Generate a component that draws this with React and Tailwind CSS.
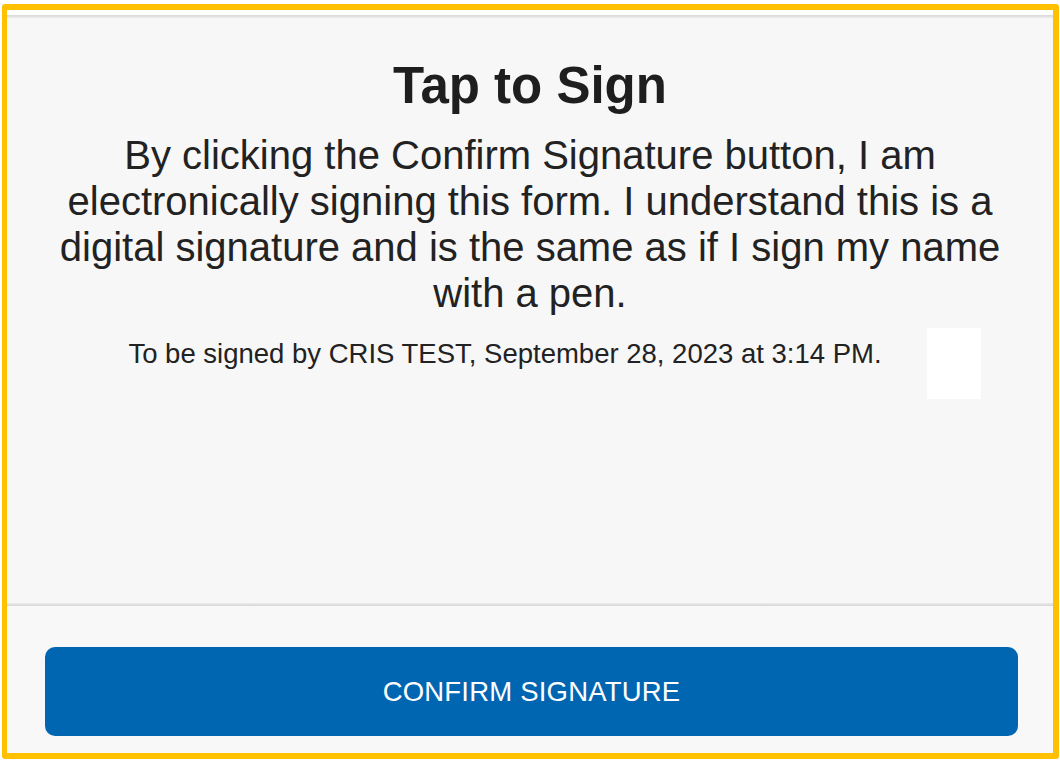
import React from 'react';

function App() {
  return (
    <div className="w-[1060px] h-[760px] bg-white pt-[4px] pl-[2px] pr-[1px] pb-[1px] font-['Liberation_Sans',Arial,sans-serif]">
      <div className="h-full flex flex-col border-[6px] border-l-[5px] border-[#ffc000] rounded-[3px] bg-white">
        <div className="h-[5px] bg-white" />
        <div className="h-[3px] bg-gradient-to-b from-[#d9d9d9] to-[#ebebeb]" />

        {/* Signing panel */}
        <div className="flex-1 bg-[#f7f7f7] flex flex-col items-center px-[40px] pt-[43px]">
          <h1 className="text-[51px] leading-[50px] font-bold text-[#1e1e1e]">Tap to Sign</h1>
          <p className="mt-[21px] text-[40px] leading-[46px] text-[#222] text-center">
            By clicking the Confirm Signature button, I am electronically signing this form. I understand this is a digital signature and is the same as if I sign my name with a pen.
          </p>
          <div className="mt-[12px] w-full flex justify-center items-start gap-[45px] pl-[49px]">
            <span className="mt-[10px] text-[27.5px] leading-[31px] text-[#222]">
              To be signed by CRIS TEST, September 28, 2023 at 3:14 PM.
            </span>
            <div className="w-[54px] h-[71px] bg-white" />
          </div>
        </div>

        <div className="h-[3px] bg-gradient-to-b from-[#ececec] to-[#d6d6d6]" />
        <div className="bg-[#f8f8f8] pt-[41px] pb-[17px] pl-[38px] pr-[35px]">
          <button className="w-full h-[89px] rounded-[10px] bg-[#0066b2] text-white text-[27.5px] tracking-[0.2px]">
            CONFIRM SIGNATURE
          </button>
        </div>
      </div>
    </div>
  );
}

export default App;
